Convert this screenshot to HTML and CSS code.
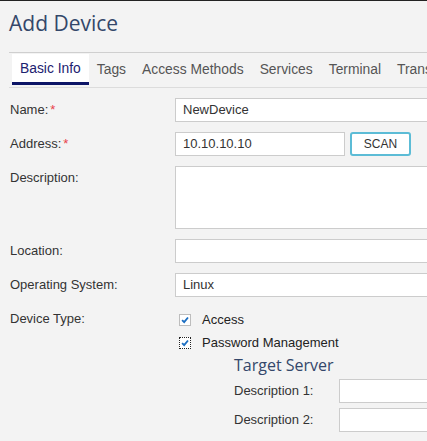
FILE: index.html
```html
<!DOCTYPE html>
<html>
<head>
<meta charset="utf-8">
<link rel="stylesheet" href="styles.css">
</head>
<body>
<div class="page">
  <h1 class="title">Add Device</h1>
  <div class="tabs">
    <div class="tab active">Basic Info</div>
    <div class="tab">Tags</div>
    <div class="tab">Access Methods</div>
    <div class="tab">Services</div>
    <div class="tab">Terminal</div>
    <div class="tab">Transfer</div>
  </div>
  <div class="form">
    <div class="row">
      <div class="label">Name:<span class="req">*</span></div>
      <div class="field"><div class="input wide">NewDevice</div></div>
    </div>
    <div class="row">
      <div class="label">Address:<span class="req">*</span></div>
      <div class="field"><div class="input addr">10.10.10.10</div><button class="scan">SCAN</button></div>
    </div>
    <div class="row">
      <div class="label">Description:</div>
      <div class="field"><div class="input wide area"></div></div>
    </div>
    <div class="row">
      <div class="label">Location:</div>
      <div class="field"><div class="input wide"></div></div>
    </div>
    <div class="row">
      <div class="label">Operating System:</div>
      <div class="field"><div class="input wide">Linux</div></div>
    </div>
    <div class="row">
      <div class="label">Device Type:</div>
      <div class="field col">
        <div class="check"><span class="box"><svg viewBox="0 0 12 12" width="12" height="12"><path d="M2.5 6.2 L5 8.6 L9.6 3" fill="none" stroke="#1b6ec2" stroke-width="2.2"/></svg></span>Access</div>
        <div class="check"><span class="box focus"><svg viewBox="0 0 12 12" width="12" height="12"><path d="M2.5 6.2 L5 8.6 L9.6 3" fill="none" stroke="#1b6ec2" stroke-width="2.2"/></svg></span>Password Management</div>
        <div class="target">
          <div class="subtitle">Target Server</div>
          <div class="subrow"><div class="sublabel">Description 1:</div><div class="input sub"></div></div>
          <div class="subrow"><div class="sublabel">Description 2:</div><div class="input sub"></div></div>
        </div>
      </div>
    </div>
  </div>
</div>
</body>
</html>
```

FILE: styles.css
```css
html, body {
  margin: 0;
  padding: 0;
  background: #f3f3f3;
  overflow: hidden;
}
body {
  border-top: 1px solid #222;
  font-family: "Liberation Sans", Arial, sans-serif;
  font-size: 13px;
  color: #333;
}
.page {
  width: 700px;
}
.title {
  margin: 0;
  padding: 7px 0 0 9px;
  height: 44px;
  box-sizing: border-box;
  font-family: "Open Sans", "Liberation Sans", sans-serif;
  font-weight: 400;
  font-size: 21px;
  line-height: 31px;
  color: #34476a;
}
.tabs {
  margin-left: 9px;
  margin-top: 7px;
  border-top: 1px solid #cfcfcf;
  border-bottom: 1px solid #dcdcdc;
  padding: 1px 0 2px 3px;
  display: flex;
}
.tab {
  padding: 0 8px;
  height: 31px;
  line-height: 31px;
  font-size: 13.85px;
  color: #555;
  box-sizing: border-box;
  white-space: nowrap;
}
.tab.active {
  background: #fff;
  color: #1c2170;
  border-bottom: 3px solid #0c1466;
  line-height: 29px;
}
.form {
  padding: 10px 0 0 10px;
}
.row {
  display: flex;
  margin-bottom: 10px;
}
.label {
  width: 165px;
  flex: none;
  line-height: 24px;
}
.req {
  color: #e8414a;
  margin-left: 2px;
}
.field {
  display: flex;
  align-items: flex-start;
}
.field.col {
  flex-direction: column;
  align-items: stretch;
  margin-top: 1px;
}
.input {
  box-sizing: border-box;
  height: 24px;
  background: #fff;
  border: 1px solid #cccccc;
  padding: 0 7px;
  line-height: 22px;
  color: #333;
}
.input.wide { width: 320px; }
.input.addr { width: 170px; }
.input.area { height: 63px; }
.scan {
  margin-left: 5px;
  width: 61px;
  height: 24px;
  box-sizing: border-box;
  border: 2px solid #5cbcd6;
  border-radius: 3px;
  background: #fff;
  font-family: "Liberation Sans", Arial, sans-serif;
  font-size: 12px;
  color: #333;
  padding: 0;
}
.check {
  display: flex;
  align-items: center;
  height: 23px;
  padding-left: 4px;
  color: #222;
}
.box {
  width: 12px;
  height: 12px;
  box-sizing: border-box;
  border: 1px solid #bdbdbd;
  background: #fff;
  margin-right: 11px;
  display: flex;
  align-items: center;
  justify-content: center;
}
.box svg { width: 10px; height: 10px; }
.box.focus {
  border: 1px dotted #222;
}
.target {
  padding-left: 59px;
}
.subtitle {
  font-family: "Open Sans", "Liberation Sans", sans-serif;
  font-size: 16px;
  line-height: 22px;
  color: #34476a;
  margin-bottom: 3px;
}
.subrow {
  display: flex;
  margin-bottom: 5px;
}
.sublabel {
  width: 105px;
  line-height: 24px;
}
.input.sub { width: 150px; }
```
